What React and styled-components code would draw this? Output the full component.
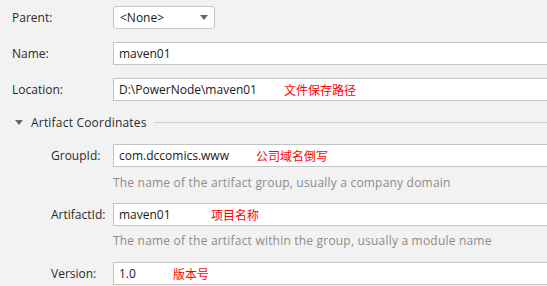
import styled, { createGlobalStyle } from 'styled-components';

const GlobalStyle = createGlobalStyle`
  html, body {
    margin: 0;
    padding: 0;
    background: #f2f2f2;
    overflow: hidden;
  }
  body {
    font-family: "Open Sans", "Noto Sans CJK SC", sans-serif;
    font-size: 12px;
    color: #222;
  }
`;

const Page = styled.div`
  width: 547px;
  height: 286px;
  display: flex;
  flex-direction: column;
  padding-top: 6px;
  box-sizing: border-box;
  overflow: hidden;
`;

const Row = styled.div`
  display: flex;
  align-items: center;
  height: 23px;
  margin-top: ${props => props.gap || 0}px;
  padding-left: ${props => props.indent || 12}px;
`;

const Label = styled.div`
  width: ${props => props.width || 101}px;
  flex-shrink: 0;
  color: #2b2b2b;
`;

const Field = styled.div`
  position: relative;
  flex: 1;
  height: 23px;
  margin-right: -10px;
  box-sizing: border-box;
  background: #ffffff;
  border: 1px solid #c4c4c4;
  display: flex;
  align-items: center;
  padding-left: 5px;
  color: #1a1a1a;
  white-space: nowrap;
`;

const Note = styled.span`
  position: absolute;
  left: ${props => props.at}px;
  top: 3px;
  color: #ff0000;
  font-family: "Noto Sans CJK SC", sans-serif;
  font-size: 12px;
  line-height: 16px;
`;

const Select = styled.div`
  width: 102px;
  height: 23px;
  box-sizing: border-box;
  background: #ffffff;
  border: 1px solid #c4c4c4;
  border-radius: 3px;
  display: flex;
  align-items: center;
  justify-content: space-between;
  padding: 0 6px 0 6px;
  color: #1a1a1a;
`;

const Arrow = styled.span`
  width: 0;
  height: 0;
  border-left: 4.5px solid transparent;
  border-right: 4.5px solid transparent;
  border-top: 5px solid #666;
`;

const Section = styled.div`
  display: flex;
  align-items: center;
  height: 16px;
  margin-top: 13px;
  padding-left: 15px;
`;

const Toggle = styled.span`
  width: 0;
  height: 0;
  border-left: 4px solid transparent;
  border-right: 4px solid transparent;
  border-top: 5px solid #666;
  margin-right: 8px;
`;

const SectionTitle = styled.span`
  color: #2b2b2b;
  letter-spacing: 0.2px;
`;

const Rule = styled.div`
  flex: 1;
  height: 1px;
  background: #d0d0d0;
  margin-left: 7px;
`;

const Hint = styled.div`
  height: 16px;
  line-height: 16px;
  margin-top: ${props => props.gap}px;
  padding-left: 113px;
  color: #8c8c8c;
  letter-spacing: 0.2px;
  white-space: nowrap;
`;

export default function App() {
  return (
    <Page>
      <GlobalStyle />
      <Row>
        <Label>Parent:</Label>
        <Select>
          <span>&lt;None&gt;</span>
          <Arrow />
        </Select>
      </Row>
      <Row gap={13}>
        <Label>Name:</Label>
        <Field>maven01</Field>
      </Row>
      <Row gap={13}>
        <Label>Location:</Label>
        <Field>
          D:\PowerNode\maven01
          <Note at={170}>文件保存路径</Note>
        </Field>
      </Row>
      <Section>
        <Toggle />
        <SectionTitle>Artifact Coordinates</SectionTitle>
        <Rule />
      </Section>
      <Row gap={14} indent={51}>
        <Label width={62}>GroupId:</Label>
        <Field>
          com.dccomics.www
          <Note at={142}>公司域名倒写</Note>
        </Field>
      </Row>
      <Hint gap={8}>The name of the artifact group, usually a company domain</Hint>
      <Row gap={12} indent={51}>
        <Label width={62}>ArtifactId:</Label>
        <Field>
          maven01
          <Note at={97}>项目名称</Note>
        </Field>
      </Row>
      <Hint gap={7}>The name of the artifact within the group, usually a module name</Hint>
      <Row gap={13} indent={51}>
        <Label width={62}>Version:</Label>
        <Field>
          1.0
          <Note at={59}>版本号</Note>
        </Field>
      </Row>
    </Page>
  );
}
